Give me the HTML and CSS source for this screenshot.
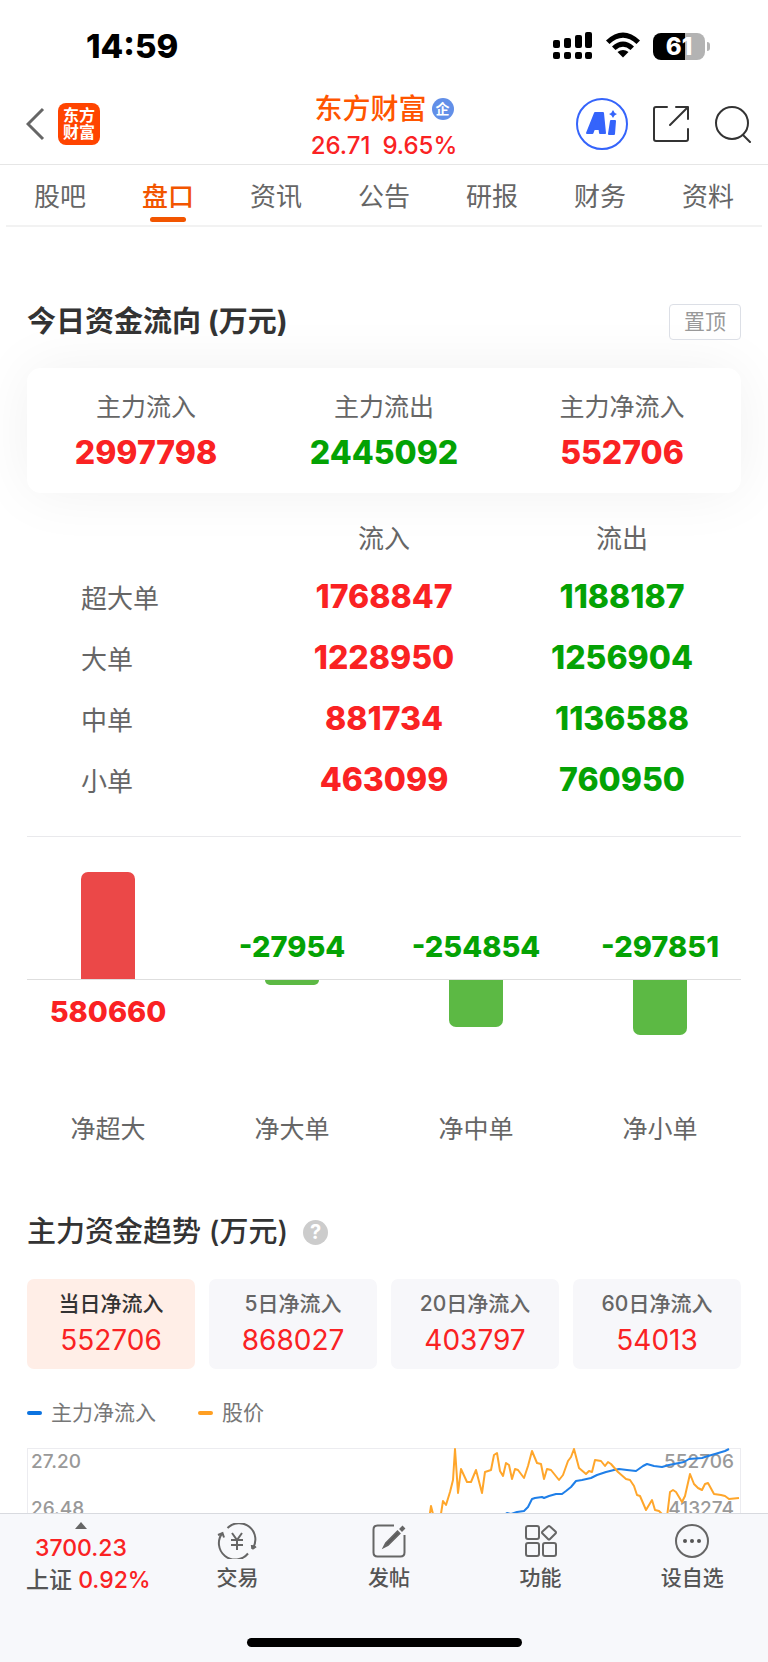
FILE: index.html
```html
<!DOCTYPE html>
<html lang="zh-CN">
<head>
    <meta charset="UTF-8">
    <meta name="viewport" content="width=device-width, initial-scale=1.0">
    <title>东方财富 - 盘口</title>
    <link rel="stylesheet" href="styles.css">
</head>
<body>

<!-- Status bar -->
<div class="status-bar">
    <span class="time">14:59</span>
    <div class="status-icons">
        <svg width="40" height="28" viewBox="0 0 40 28">
            <rect x="0" y="8" width="7" height="8" rx="2"/>
            <rect x="11" y="6" width="7" height="10" rx="2"/>
            <rect x="22" y="3" width="7" height="13" rx="2"/>
            <rect x="32" y="0" width="7" height="16" rx="2"/>
            <rect x="0" y="20" width="7" height="7" rx="2"/>
            <rect x="11" y="20" width="7" height="7" rx="2"/>
            <rect x="22" y="20" width="7" height="7" rx="2"/>
            <rect x="32" y="20" width="7" height="7" rx="2"/>
        </svg>
        <svg width="36" height="28" viewBox="0 0 36 28">
            <path d="M1 8.500Q18 -7.500 35 8.500L31.500 12Q18 -0.500 4.500 12Z"/>
            <path d="M7 14.500Q18 4.500 29 14.500L25.500 18Q18 11.500 10.500 18Z"/>
            <path d="M12.500 20Q18 15.800 23.500 20L18 25.500Z"/>
        </svg>
        <div class="battery"><span class="battery-body">61</span><span class="battery-tip"></span></div>
    </div>
</div>

<!-- Header -->
<header class="header">
    <div class="header-left">
        <a href="#" class="icon-link" aria-label="返回">
            <svg width="20" height="34" viewBox="0 0 20 34" fill="none" stroke="#666" stroke-width="3"><path d="M17 2L2 17L17 32"/></svg>
        </a>
        <a href="#" class="logo">东方<br>财富</a>
    </div>
    <div class="header-title">
        <h1>东方财富<span class="badge">企</span></h1>
        <p class="quote"><span>26.71</span><span>9.65%</span></p>
    </div>
    <div class="header-right">
        <button class="icon-btn" aria-label="AI">
            <svg width="52" height="52" viewBox="0 0 52 52">
                <circle cx="26" cy="26" r="25" fill="none" stroke="#3564fb" stroke-width="2"/>
                <g fill="#3564fb" stroke="#3564fb" stroke-width="2" stroke-linejoin="round">
                    <path fill-rule="evenodd" d="M11 35L19 15H27L29 35H24L23.500 31H18L16.500 35ZM20 26H23L22.500 20.500Z"/>
                    <path d="M35 23H39L38 36H33Z"/>
                    <path stroke="none" d="M37 12Q38 15 41 16Q38 17 37 20Q36 17 33 16Q36 15 37 12Z"/>
                </g>
            </svg>
        </button>
        <button class="icon-btn" aria-label="分享">
            <svg width="38" height="38" viewBox="0 0 38 38" fill="none" stroke="#333" stroke-width="2" stroke-linecap="round" stroke-linejoin="round">
                <path d="M15 2H4Q2 2 2 4V34Q2 36 4 36H34Q36 36 36 34V24M24 2H36V14M36 2L18 20"/>
            </svg>
        </button>
        <button class="icon-btn" aria-label="搜索">
            <svg width="38" height="38" viewBox="0 0 38 38" fill="none" stroke="#333" stroke-width="2" stroke-linecap="round">
                <circle cx="18" cy="18" r="16"/><path d="M29 30L36 37"/>
            </svg>
        </button>
    </div>
</header>

<!-- Tabs -->
<nav class="tabs">
    <a href="#">股吧</a>
    <a href="#" class="active">盘口</a>
    <a href="#">资讯</a>
    <a href="#">公告</a>
    <a href="#">研报</a>
    <a href="#">财务</a>
    <a href="#">资料</a>
</nav>

<main class="content">
    <!-- Today's capital flow -->
    <section class="flow">
        <div class="section-head">
            <h2>今日资金流向 (万元)</h2>
            <button class="btn-top">置顶</button>
        </div>

        <div class="summary">
            <div><span class="label">主力流入</span><strong class="red">2997798</strong></div>
            <div><span class="label">主力流出</span><strong class="green">2445092</strong></div>
            <div><span class="label">主力净流入</span><strong class="red">552706</strong></div>
        </div>

        <table class="orders">
            <thead>
                <tr><td></td><th scope="col">流入</th><th scope="col">流出</th></tr>
            </thead>
            <tbody>
                <tr><th scope="row">超大单</th><td class="red">1768847</td><td class="green">1188187</td></tr>
                <tr><th scope="row">大单</th><td class="red">1228950</td><td class="green">1256904</td></tr>
                <tr><th scope="row">中单</th><td class="red">881734</td><td class="green">1136588</td></tr>
                <tr><th scope="row">小单</th><td class="red">463099</td><td class="green">760950</td></tr>
            </tbody>
        </table>

        <!-- Net flow bars: upper half / lower half / name -->
        <div class="bars">
            <div class="bars-row up">
                <div class="col"><div class="bar bar-up" style="height: 107px"></div></div>
                <div class="col"><strong class="green">-27954</strong></div>
                <div class="col"><strong class="green">-254854</strong></div>
                <div class="col"><strong class="green">-297851</strong></div>
            </div>
            <div class="bars-row down">
                <div class="col"><strong class="red">580660</strong></div>
                <div class="col"><div class="bar bar-down" style="height: 5px"></div></div>
                <div class="col"><div class="bar bar-down" style="height: 47px"></div></div>
                <div class="col"><div class="bar bar-down" style="height: 55px"></div></div>
            </div>
            <div class="bars-row names">
                <span>净超大</span>
                <span>净大单</span>
                <span>净中单</span>
                <span>净小单</span>
            </div>
        </div>
    </section>

    <!-- Capital trend -->
    <section class="trend">
        <div class="section-head">
            <h2 class="medium">主力资金趋势 (万元)</h2>
            <button class="help" aria-label="说明">?</button>
        </div>

        <div class="periods">
            <button class="period active"><span>当日净流入</span><b>552706</b></button>
            <button class="period"><span>5日净流入</span><b>868027</b></button>
            <button class="period"><span>20日净流入</span><b>403797</b></button>
            <button class="period"><span>60日净流入</span><b>54013</b></button>
        </div>

        <div class="legend">
            <span class="legend-item blue">主力净流入</span>
            <span class="legend-item orange">股价</span>
        </div>

        <svg class="chart" viewBox="0 0 714 240">
            <rect x="0.500" y="0.500" width="713" height="239" fill="none" stroke="#ececf0"/>
            <g class="axis">
                <text x="4" y="20">27.20</text>
                <text x="4" y="67">26.48</text>
                <text x="707" y="20" text-anchor="end">552706</text>
                <text x="707" y="67" text-anchor="end">413274</text>
            </g>
            <polyline class="line-blue" points="470,72 480,65 484,66 490,64 497,63 501,59 505,51 508,50 515,49 517,50 522,48 529,46 535,46 539,43 544,39 549,33 555,32 564,30 570,27 579,24 587,22 592,21 600,22 609,23 616,18 620,16 627,18 635,19 642,17 652,15 657,14 662,11 675,10 681,8 688,6 698,3 702,1"/>
            <polyline class="line-orange" points="402,72 404,58 407,70 413,72 416,53 419,57 423,44 426,32 428,1 431,45 434,21 440,34 444,34 449,22 455,45 458,24 464,22 467,7 470,5 473,23 476,28 479,15 482,17 485,31 488,21 491,22 497,30 501,18 505,3 510,15 514,16 517,31 520,21 524,22 532,32 536,27 541,13 544,9 547,1 552,20 559,26 562,23 565,24 568,12 574,13 578,18 581,14 584,16 591,24 599,31 603,32 607,38 610,47 613,48 619,62 625,52 628,62 632,63 638,69 640,69 643,44 646,42 649,44 655,54 658,48 663,26 667,36 671,40 675,42 678,36 681,35 687,46 694,47 698,48 702,51 712,50"/>
        </svg>
    </section>
</main>

<!-- Bottom bar -->
<footer class="bottom">
    <nav class="toolbar">
        <a href="#" class="index">
            <span class="index-price red">
                <svg width="12" height="7" viewBox="0 0 12 7"><path d="M6 0L12 7H0Z" fill="#666"/></svg>
                3700.23
            </span>
            <span>上证 <span class="red">0.92%</span></span>
        </a>
        <a href="#">
            <svg width="40" height="36" viewBox="0 0 40 36">
                <path d="M10.500 5A16.300 16.300 0 0 1 35.300 26L39 23.500M35.300 26L34.800 22M31 30.500A16.300 16.300 0 0 1 5.500 10M1 12L5.500 10L7 14.500"/>
                <path d="M15 10L20 17L25 10M14 17H26M14 22H26M20 17V27"/>
            </svg>
            交易
        </a>
        <a href="#">
            <svg width="36" height="36" viewBox="0 0 36 36">
                <path d="M23 2.500H6.500Q2.500 2.500 2.500 6.500V29.500Q2.500 33.500 6.500 33.500H29.500Q33.500 33.500 33.500 29.500V12"/>
                <path d="M13 24L15 20L26.500 8.500L28.500 10.500L17 22ZM29.500 6L31.500 4L33 5.500L31 7.500Z" fill="#555"/>
            </svg>
            发帖
        </a>
        <a href="#">
            <svg width="36" height="36" viewBox="0 0 36 36">
                <rect x="3" y="3" width="13" height="13" rx="2"/>
                <rect x="3" y="20" width="13" height="13" rx="2"/>
                <rect x="20" y="20" width="13" height="13" rx="2"/>
                <path d="M25 3.500Q26 2.500 27 3.500L32.500 8.500Q33.500 9.500 32.500 10.500L27 16Q26 17 25 16L19.500 10.500Q18.500 9.500 19.500 8.500Z"/>
            </svg>
            功能
        </a>
        <a href="#">
            <svg width="36" height="36" viewBox="0 0 36 36">
                <circle cx="18" cy="18" r="16"/>
                <g fill="#555" stroke="none"><circle cx="11" cy="18" r="2"/><circle cx="18" cy="18" r="2"/><circle cx="25" cy="18" r="2"/></g>
            </svg>
            设自选
        </a>
    </nav>
    <div class="home-indicator"></div>
</footer>

</body>
</html>
```
FILE: styles.css
```css
:root {
    --red: #fa2223;
    --green: #04a204;
    --orange: #f25500;
    --text: #333;
    --text-gray: #666;
    --line: #e9e9ec;
}

* {
    box-sizing: border-box;
}

body {
    margin: 0;
    height: 100vh;
    display: flex;
    flex-direction: column;
    background-color: #fff;
    color: var(--text);
    font-family: Inter, "Noto Sans CJK SC", sans-serif;
}

h1, h2, p {
    margin: 0;
}

a {
    color: inherit;
    text-decoration: none;
}

button {
    padding: 0;
    border: none;
    background: none;
    font-family: inherit;
    color: inherit;
    cursor: pointer;
}

svg {
    display: block;
}

.red {
    color: var(--red);
}

.green {
    color: var(--green);
}

/* Status bar */
.status-bar {
    flex: none;
    height: 84px;
    padding: 8px 58px 0 86px;
    display: flex;
    align-items: center;
    justify-content: space-between;
    color: #000;
}

.time {
    font-size: 33px;
    font-weight: 800;
}

.status-icons {
    display: flex;
    align-items: center;
    gap: 12px;
}

.battery {
    display: flex;
    align-items: center;
    gap: 2px;
}

.battery-body {
    width: 52px;
    height: 27px;
    border-radius: 8px;
    background: linear-gradient(to right, #000 62%, #b3b3b3 62%);
    color: #fff;
    font-size: 24px;
    font-weight: 800;
    line-height: 27px;
    text-align: center;
}

.battery-tip {
    width: 3px;
    height: 9px;
    border-radius: 0 4px 4px 0;
    background-color: #b3b3b3;
}

/* Header */
.header {
    flex: none;
    height: 81px;
    padding: 0 16px;
    display: grid;
    grid-template-columns: 1fr auto 1fr;
    align-items: center;
    border-bottom: 1px solid #e6e6e6;
}

.header-left, .header-right {
    display: flex;
    align-items: center;
}

.header-left {
    gap: 12px;
    padding-left: 10px;
}

.header-right {
    justify-content: flex-end;
    gap: 24px;
}

.logo {
    width: 42px;
    height: 42px;
    padding-top: 4px;
    border-radius: 8px;
    background-color: #ff4400;
    color: #fff;
    font-size: 16px;
    font-weight: 700;
    line-height: 17px;
    text-align: center;
}

.header-title {
    padding-top: 6px;
    text-align: center;
}

.header-title h1 {
    display: flex;
    align-items: center;
    justify-content: center;
    gap: 5px;
    color: #ff5500;
    font-size: 28px;
    font-weight: 500;
    line-height: 38px;
}

.badge {
    width: 22px;
    height: 22px;
    border-radius: 50%;
    background-color: #628fe8;
    color: #fff;
    font-size: 14px;
    font-weight: 700;
    line-height: 22px;
    text-align: center;
}

.quote {
    display: flex;
    justify-content: center;
    gap: 12px;
    color: var(--red);
    font-size: 24px;
    font-weight: 500;
    line-height: 36px;
}

/* Tabs */
.tabs {
    flex: none;
    height: 62px;
    margin: 0 6px;
    display: grid;
    grid-template-columns: repeat(7, 1fr);
    border-bottom: 2px solid #f2f2f2;
}

.tabs a {
    display: flex;
    flex-direction: column;
    align-items: center;
    padding-top: 12px;
    color: var(--text-gray);
    font-size: 26px;
    line-height: 40px;
}

.tabs .active {
    color: var(--orange);
    font-weight: 500;
}

.tabs .active::after {
    content: "";
    width: 36px;
    height: 5px;
    border-radius: 3px;
    background-color: var(--orange);
}

/* Content */
.content {
    flex: 1;
    min-height: 0;
    padding: 77px 27px 0;
    overflow-y: auto;
    scrollbar-width: none;
}

.section-head {
    display: flex;
    align-items: center;
    height: 36px;
}

.section-head h2 {
    font-size: 29px;
    font-weight: 700;
    line-height: 36px;
}

.section-head .medium {
    font-weight: 500;
}

.btn-top {
    width: 72px;
    height: 36px;
    margin-left: auto;
    border: 1px solid #dcdfe6;
    border-radius: 4px;
    color: #999;
    font-size: 21px;
    line-height: 32px;
}

.summary {
    display: grid;
    grid-template-columns: repeat(3, 1fr);
    margin-top: 28px;
    padding: 21px 0 19px;
    border-radius: 14px;
    background-color: #fff;
    box-shadow: 0 0 60px rgba(0, 0, 0, 0.06);
    text-align: center;
}

.summary .label {
    display: block;
    margin-bottom: 6px;
    color: var(--text-gray);
    font-size: 25px;
    line-height: 36px;
}

.summary strong {
    display: block;
    font-size: 32px;
    font-weight: 800;
    line-height: 43px;
}

.orders {
    width: 100%;
    margin-top: 21px;
    border-collapse: collapse;
    table-layout: fixed;
    text-align: center;
}

.orders th {
    padding: 0;
    height: 52px;
    color: var(--text-gray);
    font-size: 26px;
    font-weight: 400;
}

.orders thead th {
    padding-bottom: 8px;
}

.orders tbody th {
    padding-left: 54px;
    text-align: left;
}

.orders td {
    padding: 0;
    font-size: 32px;
    font-weight: 800;
}

.orders tbody tr {
    height: 61px;
}

/* Net flow bars */
.bars {
    margin-top: 26px;
    border-top: 1px solid var(--line);
}

.bars-row {
    display: grid;
    grid-template-columns: repeat(4, 1fr);
    column-gap: 22px;
}

.bars-row .col {
    display: flex;
    flex-direction: column;
    align-items: center;
}

.bars-row strong {
    font-size: 29px;
    font-weight: 800;
    line-height: 36px;
}

.up {
    height: 142px;
}

.up .col {
    justify-content: flex-end;
}

.up strong {
    margin-bottom: 14px;
}

.down {
    height: 130px;
    border-top: 1px solid #dedede;
}

.down strong {
    margin-top: 14px;
}

.bar {
    width: 54px;
}

.bar-up {
    border-radius: 7px 7px 0 0;
    background-color: #eb4848;
}

.bar-down {
    border-radius: 0 0 7px 7px;
    background-color: #5cb944;
}

.names {
    color: var(--text-gray);
    font-size: 25px;
    line-height: 40px;
    text-align: center;
}

/* Capital trend */
.trend {
    margin-top: 65px;
}

.help {
    width: 25px;
    height: 25px;
    margin-left: 15px;
    border-radius: 50%;
    background-color: #ccc;
    color: #fff;
    font-size: 20px;
    font-weight: 700;
    line-height: 25px;
}

.periods {
    display: grid;
    grid-template-columns: repeat(4, 1fr);
    gap: 14px;
    margin-top: 29px;
}

.period {
    height: 90px;
    border-radius: 7px;
    background-color: #f7f7fa;
    color: var(--text-gray);
}

.period.active {
    background-color: #ffeee7;
    color: var(--text);
}

.period span {
    display: block;
    font-size: 21px;
    font-weight: 500;
    line-height: 32px;
}

.period b {
    display: block;
    color: var(--red);
    font-size: 28px;
    font-weight: 400;
    line-height: 40px;
}

.legend {
    display: flex;
    gap: 42px;
    margin-top: 26px;
    color: #777;
    font-size: 21px;
    line-height: 36px;
}

.legend-item {
    display: flex;
    align-items: center;
    gap: 9px;
}

.legend-item::before {
    content: "";
    width: 15px;
    height: 4px;
    border-radius: 2px;
    background-color: currentColor;
}

.legend .blue::before {
    background-color: #0c73e0;
}

.legend .orange::before {
    background-color: #ff9f22;
}

.chart {
    width: 100%;
    margin-top: 17px;
}

.line-blue, .line-orange {
    fill: none;
    stroke: #1f7fe8;
    stroke-width: 2;
    stroke-linejoin: round;
}

.line-orange {
    stroke: #ffa62b;
}

.axis {
    fill: #999;
    font-size: 19px;
    font-weight: 500;
}

/* Bottom bar */
.bottom {
    flex: none;
    height: 149px;
    border-top: 1px solid #d8dadf;
    background-color: #f7f8fb;
}

.toolbar {
    display: grid;
    grid-template-columns: repeat(5, 1fr);
    height: 124px;
    padding-left: 10px;
}

.toolbar a {
    display: flex;
    flex-direction: column;
    align-items: center;
    gap: 3px;
    padding-top: 9px;
    color: #555;
    font-size: 21px;
    font-weight: 500;
    line-height: 32px;
}

.toolbar a svg {
    fill: none;
    stroke: #666;
    stroke-width: 2;
}

.toolbar .index {
    align-items: flex-start;
    gap: 0;
    padding: 8px 0 0 16px;
    font-size: 23px;
    white-space: nowrap;
}

.index-price {
    display: flex;
    flex-direction: column;
    align-items: center;
    gap: 3px;
    margin-left: 9px;
}

.toolbar .index svg {
    stroke: none;
}

.home-indicator {
    width: 275px;
    height: 9px;
    margin: 0 auto;
    border-radius: 5px;
    background-color: #000;
}
```
